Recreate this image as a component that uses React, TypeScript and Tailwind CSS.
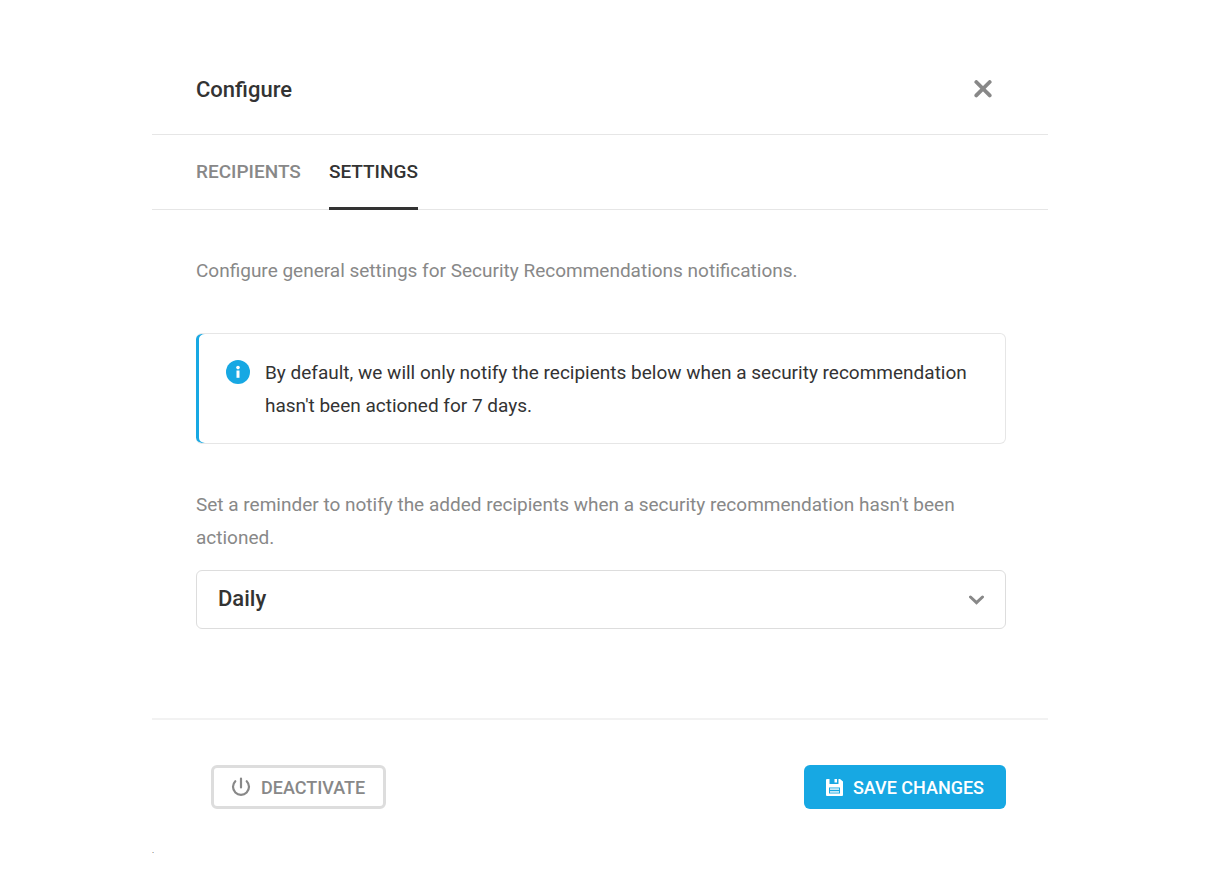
const tabs = [
  { label: "RECIPIENTS", active: false },
  { label: "SETTINGS", active: true },
];

function CloseIcon() {
  return (
    <svg className="size-[18px]" viewBox="0 0 18 18" fill="none" stroke="currentColor" strokeWidth={3.8} strokeLinecap="round" aria-hidden="true">
      <path d="M2.3 2l13.4 13.4M15.7 2L2.3 15.4" />
    </svg>
  );
}

function InfoIcon() {
  return (
    <svg className="size-6 shrink-0 text-[#17a8e3]" viewBox="0 0 24 24" aria-hidden="true">
      <circle cx="12" cy="12" r="12" fill="currentColor" />
      <circle cx="12" cy="7.6" r="1.8" fill="#fff" />
      <path d="M10.500 10.500h3v7.300h-3z" fill="#fff" />
    </svg>
  );
}

function ChevronIcon() {
  return (
    <svg className="pointer-events-none absolute top-[25px] right-[21px] h-[10px] w-4 text-[#888]" viewBox="0 0 16 10" fill="none" stroke="currentColor" strokeWidth={3} aria-hidden="true">
      <path d="M1.500 2l6 5.600 6-5.600" strokeLinecap="round" strokeLinejoin="miter" />
    </svg>
  );
}

function PowerIcon() {
  return (
    <svg className="size-5" viewBox="0 0 20 20" fill="none" stroke="currentColor" strokeWidth={2.2} aria-hidden="true">
      <path d="M10 1.500v9M4.300 4.200a8 8 0 1 0 11.400 0" strokeLinecap="round" />
    </svg>
  );
}

function SaveIcon() {
  return (
    <svg className="size-[17px]" viewBox="0 0 17 17" aria-hidden="true">
      <path
        fill="currentColor"
        fillRule="evenodd"
        d="M1 0h2.500v5h9V0H14l3 2.500V16a1 1 0 0 1-1 1H1a1 1 0 0 1-1-1V1a1 1 0 0 1 1-1zM3 8.500v6h11v-6z"
      />
      <path fill="currentColor" d="M8.500 0H11v3.500H8.500z" />
      <path fill="currentColor" fillOpacity={0.75} d="M4 9.300h9v1.800H4zM4 12h9v1.800H4z" />
    </svg>
  );
}

export default function App() {
  return (
    <div className="min-h-screen bg-white px-[152px] pt-11 font-['Roboto',sans-serif] text-[#333]">
      <main className="max-w-[896px]">
        <header className="flex h-[91px] items-center justify-between border-b border-[#e6e6e6] pr-14 pl-11">
          <h1 className="pt-px text-[22px] leading-[30px] font-medium">Configure</h1>
          <button type="button" aria-label="Close" className="text-[#888]">
            <CloseIcon />
          </button>
        </header>

        <nav className="flex h-[75px] gap-7 border-b border-[#e6e6e6] px-11">
          {tabs.map((tab) => (
            <button
              key={tab.label}
              type="button"
              className={`-mb-px border-b-3 pt-[2px] text-[19px] font-medium ${tab.active ? "border-[#333] text-[#333]" : "border-transparent text-[#888]"}`}
            >
              {tab.label}
            </button>
          ))}
        </nav>

        <section className="pt-11 pr-[42px] pb-[89px] pl-11 text-[19px] leading-[33px] text-[#888]">
          <p>Configure general settings for Security Recommendations notifications.</p>
          <div className="mt-[46px] flex gap-[15px] rounded-[6px] border border-l-0 border-[#e6e6e6] pt-[22px] pr-6 pb-[21px] pl-[30px] text-[#333] shadow-[inset_3px_0_0_#17a8e3]">
            <div className="pt-1">
              <InfoIcon />
            </div>
            <p>By default, we will only notify the recipients below when a security recommendation hasn't been actioned for 7 days.</p>
          </div>
          <label htmlFor="reminder" className="mt-11 block">
            Set a reminder to notify the added recipients when a security recommendation hasn't been actioned.
          </label>
          <div className="relative mt-4">
            <select id="reminder" className="h-[59px] w-full appearance-none rounded-[6px] border border-[#ddd] bg-white px-[21px] pb-[2px] text-[22px] font-medium text-[#333]">
              <option>Daily</option>
            </select>
            <ChevronIcon />
          </div>
        </section>

        <footer className="flex items-center justify-between border-t-2 border-[#f2f2f2] pt-[45px] pr-[42px] pl-[59px]">
          <button type="button" className="flex h-11 items-center gap-[10px] rounded-[6px] border-3 border-[#ddd] pr-[18px] pl-[17px] text-[18px] font-medium text-[#888]">
            <PowerIcon />
            DEACTIVATE
          </button>
          <button type="button" className="flex h-11 items-center gap-[10px] rounded-[6px] bg-[#17a8e3] px-[22px] text-[18px] font-medium text-white">
            <SaveIcon />
            SAVE CHANGES
          </button>
        </footer>
        <p className="mt-9 text-[8px] leading-3">.</p>
      </main>
    </div>
  );
}
